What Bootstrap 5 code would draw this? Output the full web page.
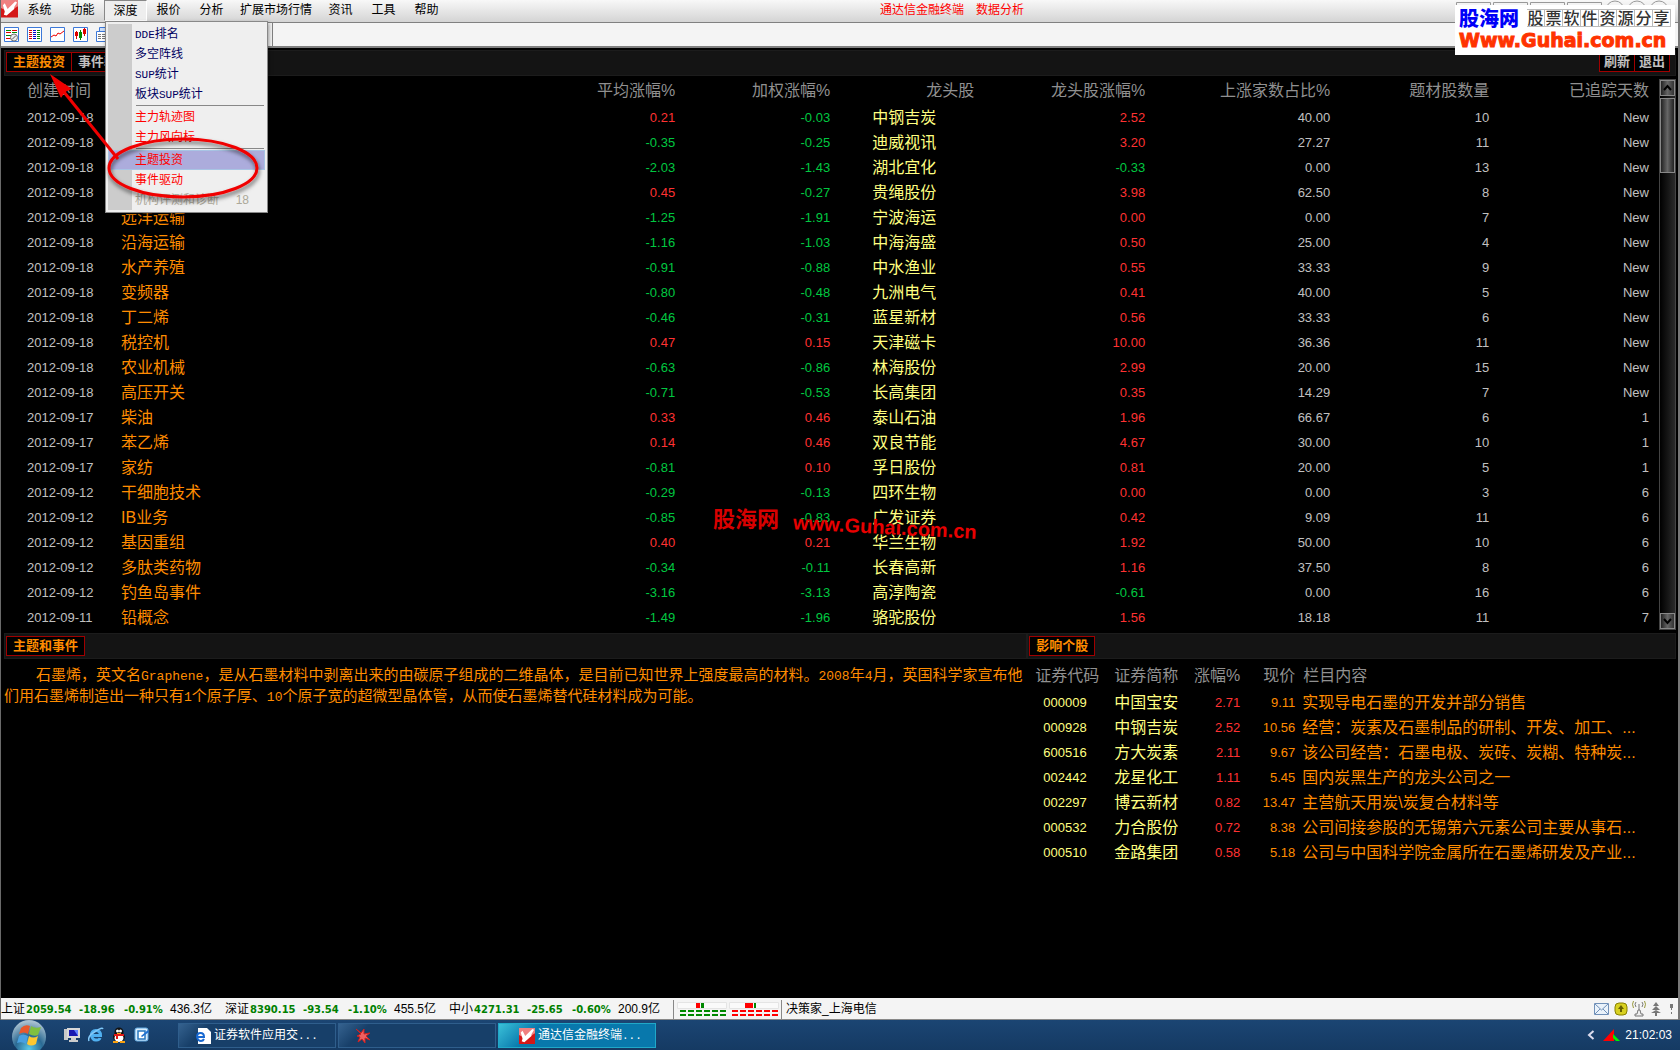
<!DOCTYPE html>
<html lang="zh-CN">
<head>
<meta charset="utf-8">
<meta name="viewport" content="width=device-width, initial-scale=1">
<title>通达信金融终端</title>
<link rel="stylesheet" href="https://cdn.jsdelivr.net/npm/bootstrap@5.3.0/dist/css/bootstrap.min.css">
<style>
body{background:#000;color:#c0c0c0;font:12px/20px "Liberation Sans","Noto Sans CJK SC",sans-serif;min-height:100vh;overflow:hidden}
.frame{border-left:1px solid #6a6a6a;border-right:2px solid #777}
.lat{font-family:"Liberation Mono",monospace;font-size:11px;line-height:1}
.menubar{height:23px;background:linear-gradient(#f8f8f8,#d4d4d4);border-bottom:1px solid #808080}
.menubar .mi{width:43px;height:21px;border:0;background:none;padding:0;color:#000;line-height:21px}
.menubar .mi.wide{width:86px}
.menubar .mi.open{background:#eee;border:1px solid #888;border-bottom-color:#fff;border-right-color:#fff;line-height:20px}
.menubar a{color:#f00;text-decoration:none;line-height:21px}
.logo{width:17px;height:18px}
.toolbar{height:25px;background:#f4f4f4;border-bottom:2px solid #808080;padding-left:3px}
.toolbar button,.quick button,.tray button{border:0;background:none;padding:0;line-height:0}
.toolbar .tools{width:268px}
.toolbar .tail{width:1px;background:#808080}
.popmenu{left:105px;top:21px;width:163px;background:#efefef;border:1px solid #888;padding:2px;z-index:5;box-shadow:1px 2px 4px #0006}
.popmenu .inner{border-left:24px solid #ccc}
.popmenu a{display:block;height:20px;line-height:20px;padding-left:3px;color:#000060;text-decoration:none}
.popmenu a.hot{color:#f00}
.popmenu a.off{color:#aca899}
.popmenu a.sel{background:#acacdc;box-shadow:inset 0 0 0 1px #a8c4e4;margin-left:-24px;padding-left:27px}
.popmenu hr{margin:1px 1px 1px 4px;border-top:1px solid #888;opacity:1}
.screen{padding-top:2px}
.lower{padding-top:3px}
.band{height:26px;background:#141414;border:1px solid #1c1c1c;margin:0 2px 0 3px;padding:1px}
.tabbtn{height:20px;border:1px solid #a00000;background:#000;color:#c0c0c0;font-weight:700;font-size:13px;line-height:16px;padding:0 6px;white-space:nowrap}
.tabbtn + .tabbtn{border-left:0}
.tabbtn.on{color:#ff8c00}
.grid{table-layout:fixed;width:100%;font-size:13px}
.grid th{height:29px;font-weight:400;font-size:16px;color:#909090;padding:0;white-space:nowrap}
.grid td{height:25px;line-height:24px;padding:0;white-space:nowrap}
.grid .cn{font-size:16px}
.grid .nm{color:#ff8c00}
.grid .ld{color:#ffff80;padding-left:42px}
.grid .up{color:#ff3232}
.grid .dn{color:#00c840}
.grid .first{padding-left:26px}
.grid .last{padding-right:10px}
.vbar{width:17px;margin:3px 2px 0 0;background:linear-gradient(90deg,#000,#2a2a2a);border:1px solid #444}
.vbar button{height:16px;width:15px;border:1px solid #888;background:linear-gradient(90deg,#222,#666,#333);padding:0;line-height:0}
.vbar .thumb{height:75px;margin-top:2px;border:1px solid #888;background:linear-gradient(90deg,#222,#666,#222)}
.story{color:#ff8c00;font-size:15px;line-height:21px;padding:5px 0 0 3px;white-space:nowrap}
.story .lat{font-size:13px}
.leftpane{width:61.2%}
.stocks{table-layout:fixed;width:100%;font-size:13px;margin-top:2px}
.stocks th{height:29px;font-weight:400;font-size:16px;color:#909090;padding:0;white-space:nowrap}
.stocks td{height:25px;line-height:24px;padding:0;white-space:nowrap}
.stocks .code,.stocks .cn{color:#ffff80}
.stocks .cn{font-size:16px}
.stocks .up{color:#ff3232}
.stocks .px{color:#ff8c00}
.stocks .memo{color:#ff8c00;font-size:16px;padding-left:7px}
.status{height:22px;background:#f4f4f4;color:#000;border-bottom:1px solid #888;line-height:23px}
.status b{font:700 10px/23px "DejaVu Sans",sans-serif;color:#008000}
.status .q2{width:53px}.status .q3{width:45px}.status .q4{width:46px}.status .q1{width:25px}
.status .grp{width:224px}
.status .vline{width:1px;height:19px;background:#888;margin-top:2px}
.taskbar{height:30px;background:linear-gradient(#1b4573,#153a63)}
.orb{border:0;padding:0;background:none;line-height:0;margin-left:11px}
.quick{gap:7px;margin-left:17px;margin-right:28px}
.task{width:158px;height:25px;margin-right:2px;border:1px solid #2f5e8c;background:linear-gradient(135deg,#35628f 0,#173f69 22px);color:#fff;text-align:left;padding:0 0 0 16px;line-height:22px;white-space:nowrap}
.task svg{margin-right:3px}
.task.act{background:linear-gradient(135deg,#3ac0d8 0,#0878ac 30px);border-color:#20a8c8}
.promo{right:5px;top:5px;width:220px;height:50px;background:#fff;z-index:6;padding:2px 4px}
.promo .blue{color:#0000f8;font:900 20px/22px "Noto Sans CJK SC",sans-serif}
.promo .slog{color:#333;font:500 16px/18px "Noto Sans CJK SC",sans-serif}
.promo .slog span{display:inline-block;width:18px;height:18px;border:1px solid #bbb;border-left:0;line-height:15px;text-align:center}
.promo .url{color:#ff3300;font:700 19px/22px "DejaVu Sans",sans-serif;-webkit-text-stroke:1px #ff3300}
.mark-cn{left:713px;top:503px;font:700 22px/28px "Noto Sans CJK SC",sans-serif;color:#d80000;z-index:4}
.mark-url{left:793px;top:515px;font:700 20px/24px "Liberation Sans",sans-serif;color:#e80000;transform:rotate(3deg);z-index:4}
.overlay{left:0;top:0;z-index:7;pointer-events:none}
</style>
<script src="https://cdn.jsdelivr.net/npm/bootstrap@5.3.0/dist/js/bootstrap.bundle.min.js"></script>
</head>
<body class="d-flex flex-column position-relative">
<svg width="0" height="0" class="position-absolute"><defs>
<symbol id="brand" viewBox="0 0 18 18"><rect width="18" height="18" fill="#d41818"/><path d="M0 0h18v6L8 12 0 8z" fill="#f08080"/><path d="M2 5 4 3l3 6 8-8 2 1-3 5v2L6 16l-3-1 1-3z" fill="#fff"/></symbol>
</defs></svg>
<div class="frame d-flex flex-column flex-grow-1">
<nav class="menubar d-flex">
<svg class="logo"><use href="#brand"/></svg>
<button class="mi">系统</button><button class="mi">功能</button><button class="mi open">深度</button><button class="mi">报价</button><button class="mi">分析</button><button class="mi wide">扩展市场行情</button><button class="mi">资讯</button><button class="mi">工具</button><button class="mi">帮助</button>
<div class="flex-grow-1 d-flex justify-content-center gap-2 ps-1"><a href="#">通达信金融终端</a><a href="#" class="ms-1">数据分析</a></div>
<svg width="222" height="22" class="me-1" fill="#f4f4f4" stroke="#999"><path d="M4.500 2.500h34v16h-34zM41.500 2.500h34v16h-34zM78.500 2.500h34v16h-34zM115.500 2.500h34v16h-34z"/><circle cx="163" cy="10" r="9"/><circle cx="185" cy="10" r="9"/><circle cx="207" cy="10" r="9"/></svg>
</nav>
<div class="toolbar d-flex">
<div class="tools d-flex gap-2 align-items-center flex-shrink-0">
<button aria-label="自选"><svg width="15" height="15"><path d="M.5.5h14v14H.5z" fill="#fff" stroke="#3c78d8"/><path d="M2 3.500h5M2 8.500h5M8 5.500h5" stroke="#080"/><path d="M2 5.500h5M2 11.500h5M8 3.500h5" stroke="#d00"/><circle cx="10" cy="10.500" r="3.500" fill="#eee" stroke="#777"/><path d="m8 12.500 4-4" stroke="#555"/></svg></button>
<button aria-label="行情"><svg width="15" height="15"><path d="M.5.5h14v14H.5z" fill="#fff" stroke="#3c78d8"/><path d="M3.500 3v10" stroke="#d00" stroke-width="3" stroke-dasharray="1 1"/><path d="M7.500 3v10" stroke="#00c" stroke-width="3" stroke-dasharray="1 1"/><path d="M11.500 3v10" stroke="#080" stroke-width="3" stroke-dasharray="1 1"/></svg></button>
<button aria-label="分时"><svg width="15" height="15"><path d="M.5.5h14v14H.5z" fill="#fff" stroke="#3c78d8"/><path d="m1 10 3-2 2 1 2-3 2 1 4-3" fill="none" stroke="#e00"/></svg></button>
<button aria-label="K线"><svg width="15" height="15"><path d="M.5.5h14v14H.5z" fill="#fff" stroke="#3c78d8"/><path d="M3.500 4v8M11.500 1v8" stroke="#d00"/><path d="M7.500 3v10" stroke="#080"/><path d="M2 5h3v4H2zM10 2h3v5h-3z" fill="#d00"/><path d="M6 5h3v6H6z" fill="#080"/></svg></button>
<button aria-label="报表"><svg width="15" height="15"><path d="M3.500.5h11v5h-11z" fill="#cfe0fa" stroke="#3c78d8"/><path d="M.5 4.500h14v10H.5z" fill="#fff" stroke="#3c78d8"/><path d="M2 7.500h11M2 9.500h11M2 11.500h11" stroke="#777" stroke-dasharray="3 1"/></svg></button>
</div>
<div class="tail flex-shrink-0"></div>
</div>
<main class="screen d-flex flex-column flex-grow-1">
<div class="band d-flex justify-content-between">
<div class="d-flex"><button class="tabbtn on">主题投资</button><button class="tabbtn">事件驱动</button></div>
<div class="d-flex me-1"><button class="tabbtn px-1">刷新</button><button class="tabbtn px-1">退出</button></div>
</div>
<section class="d-flex">
<table class="grid">
<colgroup><col style="width:7.240%"><col style="width:26.480%"><col style="width:6.940%"><col style="width:9.350%"><col style="width:8.690%"><col style="width:10.310%"><col style="width:11.160%"><col style="width:9.590%"><col></colgroup>
<thead><tr><th class="first">创建时间</th><th></th><th class="text-end">平均涨幅%</th><th class="text-end">加权涨幅%</th><th class="text-end">龙头股</th><th class="text-end">龙头股涨幅%</th><th class="text-end">上涨家数占比%</th><th class="text-end">题材股数量</th><th class="text-end last">已追踪天数</th></tr></thead>
<tbody id="themes"></tbody>
</table>
<div class="vbar d-flex flex-column flex-shrink-0"><button aria-label="上"><svg width="13" height="14"><path d="m3 9 3.500-4L10 9" fill="none" stroke="#000" stroke-width="2"/></svg></button><div class="thumb"></div><button aria-label="下" class="mt-auto"><svg width="13" height="14"><path d="m3 5 3.500 4L10 5" fill="none" stroke="#000" stroke-width="2"/></svg></button></div>
</section>
<section class="lower d-flex flex-grow-1">
<div class="leftpane flex-shrink-0">
<div class="band d-flex align-items-center me-0"><button class="tabbtn on">主题和事件</button></div>
<p class="story mb-0"><span class="ps-4 ms-2">石墨烯，英文名<span class="lat">Graphene</span>，是从石墨材料中剥离出来的由碳原子组成的二维晶体，是目前已知世界上强度最高的材料。<span class="lat">2008</span>年<span class="lat">4</span>月，英国科学家宣布他</span><br>们用石墨烯制造出一种只有<span class="lat">1</span>个原子厚、<span class="lat">10</span>个原子宽的超微型晶体管，从而使石墨烯替代硅材料成为可能。</p>
</div>
<div class="flex-grow-1">
<div class="band d-flex align-items-center ms-0"><button class="tabbtn on">影响个股</button></div>
<table class="stocks">
<colgroup><col style="width:87px"><col style="width:68px"><col style="width:58px"><col style="width:55px"><col></colgroup>
<thead><tr><th class="ps-2">证券代码</th><th>证券简称</th><th class="text-end">涨幅%</th><th class="text-end">现价</th><th class="ps-2">栏目内容</th></tr></thead>
<tbody id="stocks"></tbody>
</table>
</div>
</section>
</main>
<footer class="status d-flex">
<div class="grp d-flex flex-shrink-0"><span class="q1">上证</span><b class="q2">2059.54</b><b class="q3">-18.96</b><b class="q4">-0.91%</b><span>436.3亿</span></div>
<div class="grp d-flex flex-shrink-0"><span class="q1">深证</span><b class="q2">8390.15</b><b class="q3">-93.54</b><b class="q4">-1.10%</b><span>455.5亿</span></div>
<div class="grp d-flex flex-shrink-0"><span class="q1">中小</span><b class="q2">4271.31</b><b class="q3">-25.65</b><b class="q4">-0.60%</b><span>200.9亿</span></div>
<div class="vline"></div>
<svg width="107" height="20" class="flex-shrink-0"><path d="M3.500 4.500h49v6h-49zM55.500 4.500h49v6h-49z" fill="#fafafa" stroke="#e4e4e4"/><path d="M22 5h4v5h-4zM71 5h8v5h-8z" fill="#f00"/><path d="M27 5h3v5h-3zM80 5h2v5h-2z" fill="#080"/><path d="M6 13h47M6 17h47" stroke="#080" stroke-width="2" stroke-dasharray="6 2"/><path d="M58 13h47M58 17h47" stroke="#f00" stroke-width="2" stroke-dasharray="6 2"/></svg>
<div class="vline me-1"></div><span>决策家_上海电信</span>
<div class="tray ms-auto d-flex align-items-center gap-1">
<button aria-label="邮件"><svg width="16" height="14"><path d="M.5 1.500h14v11H.5z" fill="#eaf2fa" stroke="#7090b8"/><path d="m1 2 6.500 6L14 2M1 12l5-5M14 12 9 7" fill="none" stroke="#7090b8"/></svg></button>
<button aria-label="提示"><svg width="14" height="14"><rect x="1" y="1" width="12" height="12" rx="4" fill="#d8d020" stroke="#888000"/><path d="M7 3 4 7h2v3h2V7h2z" fill="#666000"/></svg></button>
<button aria-label="信号"><svg width="14" height="18" fill="none" stroke="#777"><path d="M7 4v6M4 2q-2 2 0 5M10 2q2 2 0 5" /><path d="M1.500 1q-2 3 0 7M12.500 1q2 3 0 7" stroke="#99993c"/><path d="M6 10h2l1 4h2v2H3v-2h2z" fill="#eee"/></svg></button>
<button aria-label="升级"><svg width="12" height="14"><path d="m6 0 3 4H3zM6 4l4 4H2zM6 8l5 3H1zM5 10h2v4H5z" fill="#777"/></svg></button>
<button aria-label="注意"><svg width="12" height="14"><path d="M4 2h3v4H4zM5 6h1v2H5zM5 10h1v2H5z" fill="#777"/></svg></button>
</div>
</footer>
</div>
<div class="taskbar d-flex align-items-center flex-shrink-0">
<button class="orb" aria-label="开始"><svg width="36" height="30"><defs><radialGradient id="orb" cx=".5" cy=".85" r=".8"><stop offset="0" stop-color="#58c8e8"/><stop offset=".5" stop-color="#2b6a94"/><stop offset="1" stop-color="#a8c0d0"/></radialGradient></defs><circle cx="18" cy="17" r="17" fill="url(#orb)"/><path d="M10 8q4-4 9-2l-2 8q-4-3-9 0z" fill="#e8582c"/><path d="M20 6q4 3 10 1l-3 8q-4 2-9-1z" fill="#80c040"/><path d="M8 16q4-3 9 0l-2 8q-4-3-9-1z" fill="#48a0e0"/><path d="M18 16q4 3 9 0l-2 8q-5 3-9 0z" fill="#ffc830"/></svg></button>
<div class="quick d-flex">
<button aria-label="桌面"><svg width="17" height="16"><path d="M0 2h4v11H0z" fill="#c8c8c8"/><path d="M3 1h13v10H3z" fill="#d8d8d8"/><path d="M5 3h9v6H5z" fill="#1818b0"/><path d="M10 3h4v6z" fill="#6080ff"/><path d="M7 11h5v2h2v2H5v-2h2z" fill="#ccc"/></svg></button>
<button aria-label="浏览器"><svg width="16" height="16" fill="none"><path d="M3.500 8.500h9q0-5-4.500-5t-4.500 5q1 5 5 4.500 3 0 3.500-2" stroke="#50b0f0" stroke-width="3"/><path d="M1 14q-2-5 7-10 6-4 7-2" stroke="#80c8f8" stroke-width="1.500"/></svg></button>
<button aria-label="QQ"><svg width="16" height="16"><ellipse cx="8" cy="10" rx="6" ry="5" fill="#111"/><circle cx="8" cy="5" r="4.500" fill="#111"/><ellipse cx="8" cy="11" rx="4.500" ry="4" fill="#fff"/><circle cx="6.500" cy="4" r="1.500" fill="#fff"/><circle cx="9.500" cy="4" r="1.500" fill="#fff"/><path d="M3 7h10v2H7v3H5V9H3z" fill="#e01818"/><path d="M6 6h4v1H6zM2 14h5v2H2zM9 14h5v2H9z" fill="#f8a010"/></svg></button>
<button aria-label="记事"><svg width="16" height="16"><rect x="1" y="1" width="13" height="13" rx="2" fill="#d8ecfc" stroke="#60a8e0"/><path d="M4 4h7v8H4z" fill="#fff" stroke="#2878c0" stroke-width="1.500"/><path d="m7 9 7-6 1 2-7 5z" fill="#2070d0"/></svg></button>
</div>
<button class="task"><svg width="16" height="16" class="align-middle"><path d="M3 0h9l4 4v12H3z" fill="#fff"/><path d="M2 9h7q0-4-3.500-4T2 9q1 4 4 4 2 0 3-2" fill="none" stroke="#1868d0" stroke-width="2"/></svg>证券软件应用交<span class="lat">...</span></button>
<button class="task" aria-label="红星"><svg width="16" height="16" class="align-middle"><path d="m1 1 5 4 3-4v5l6-1-4 3 4 4-5-2 0 5-3-4-4 3 2-5-3-1 4-2z" fill="#f06060" stroke="#d02020"/></svg></button>
<button class="task act"><svg width="16" height="16" class="align-middle ms-1"><use href="#brand"/></svg>通达信金融终端<span class="lat">...</span></button>
<div class="ms-auto d-flex align-items-center text-white me-2"><svg width="8" height="10"><path d="M6.500 1 2 5l4.500 4" fill="none" stroke="#dde" stroke-width="2"/></svg><svg width="18" height="14" class="ms-2 me-1"><path d="M0 13 11 1v12z" fill="#f00"/><path d="m10 6 7 7h-4l-3-3z" fill="#0e0"/></svg><span>21:02:03</span></div>
</div>

<div class="popmenu position-absolute"><div class="inner">
<a href="#"><span class="lat">DDE</span>排名</a><a href="#">多空阵线</a><a href="#"><span class="lat">SUP</span>统计</a><a href="#">板块<span class="lat">SUP</span>统计</a><hr><a href="#" class="hot">主力轨迹图</a><a href="#" class="hot">主力风向标</a><hr><a href="#" class="hot sel">主题投资</a><a href="#" class="hot">事件驱动</a><a href="#" class="off d-flex justify-content-between pe-3">机构评测和诊断<span>18</span></a>
</div></div>
<div class="promo position-absolute">
<div class="d-flex justify-content-between align-items-center"><span class="blue">股海网</span><span class="slog d-flex"><span>股</span><span>票</span><span>软</span><span>件</span><span>资</span><span>源</span><span>分</span><span>享</span></span></div>
<div class="url">Www.Guhai.com.cn</div>
</div>
<div class="mark-cn position-absolute">股海网</div>
<div class="mark-url position-absolute">www.Guhai.com.cn</div>
<svg class="overlay position-absolute" width="280" height="220"><defs><filter id="sh" x="-20%" y="-20%" width="140%" height="140%"><feDropShadow dx="1" dy="3" stdDeviation="2" flood-opacity=".6"/></filter></defs>
<g filter="url(#sh)"><ellipse cx="183" cy="168" rx="74" ry="29" fill="none" stroke="#f00000" stroke-width="3"/></g>
<path d="m118 159-54-67" stroke="#f00000" stroke-width="3"/><path d="m50 74 22 15-7 3-4 6z" fill="#f00000"/></svg>
<script>
const themes = `2012-09-18||0.21|-0.03|中钢吉炭|2.52|40.00|10|New
2012-09-18||-0.35|-0.25|迪威视讯|3.20|27.27|11|New
2012-09-18||-2.03|-1.43|湖北宜化|-0.33|0.00|13|New
2012-09-18||0.45|-0.27|贵绳股份|3.98|62.50|8|New
2012-09-18|远洋运输|-1.25|-1.91|宁波海运|0.00|0.00|7|New
2012-09-18|沿海运输|-1.16|-1.03|中海海盛|0.50|25.00|4|New
2012-09-18|水产养殖|-0.91|-0.88|中水渔业|0.55|33.33|9|New
2012-09-18|变频器|-0.80|-0.48|九洲电气|0.41|40.00|5|New
2012-09-18|丁二烯|-0.46|-0.31|蓝星新材|0.56|33.33|6|New
2012-09-18|税控机|0.47|0.15|天津磁卡|10.00|36.36|11|New
2012-09-18|农业机械|-0.63|-0.86|林海股份|2.99|20.00|15|New
2012-09-18|高压开关|-0.71|-0.53|长高集团|0.35|14.29|7|New
2012-09-17|柴油|0.33|0.46|泰山石油|1.96|66.67|6|1
2012-09-17|苯乙烯|0.14|0.46|双良节能|4.67|30.00|10|1
2012-09-17|家纺|-0.81|0.10|孚日股份|0.81|20.00|5|1
2012-09-12|干细胞技术|-0.29|-0.13|四环生物|0.00|0.00|3|6
2012-09-12|IB业务|-0.85|-0.83|广发证券|0.42|9.09|11|6
2012-09-12|基因重组|0.40|0.21|华兰生物|1.92|50.00|10|6
2012-09-12|多肽类药物|-0.34|-0.11|长春高新|1.16|37.50|8|6
2012-09-12|钓鱼岛事件|-3.16|-3.13|高淳陶瓷|-0.61|0.00|16|6
2012-09-11|铅概念|-1.49|-1.96|骆驼股份|1.56|18.18|11|7`;
const tone = v => v.startsWith('-') ? 'dn' : 'up';
document.getElementById('themes').innerHTML = themes.split('\n').map(r => {
  const [d, n, a, w, l, g, p, c, t] = r.split('|');
  return `<tr><td class="first">${d}</td><td class="cn nm">${n}</td><td class="text-end ${tone(a)}">${a}</td><td class="text-end ${tone(w)}">${w}</td><td class="cn ld">${l}</td><td class="text-end ${tone(g)}">${g}</td><td class="text-end">${p}</td><td class="text-end">${c}</td><td class="text-end last">${t}</td></tr>`;
}).join('');
const stocks = `000009|中国宝安|2.71|9.11|实现导电石墨的开发并部分销售
000928|中钢吉炭|2.52|10.56|经营：炭素及石墨制品的研制、开发、加工、...
600516|方大炭素|2.11|9.67|该公司经营：石墨电极、炭砖、炭糊、特种炭...
002442|龙星化工|1.11|5.45|国内炭黑生产的龙头公司之一
002297|博云新材|0.82|13.47|主营航天用炭\\炭复合材料等
000532|力合股份|0.72|8.38|公司间接参股的无锡第六元素公司主要从事石...
000510|金路集团|0.58|5.18|公司与中国科学院金属所在石墨烯研发及产业...`;
document.getElementById('stocks').innerHTML = stocks.split('\n').map(r => {
  const [c, n, g, p, m] = r.split('|');
  return `<tr><td class="code ps-3">${c}</td><td class="cn">${n}</td><td class="text-end up">${g}</td><td class="text-end px">${p}</td><td class="memo">${m}</td></tr>`;
}).join('');
</script>
</body>
</html>
